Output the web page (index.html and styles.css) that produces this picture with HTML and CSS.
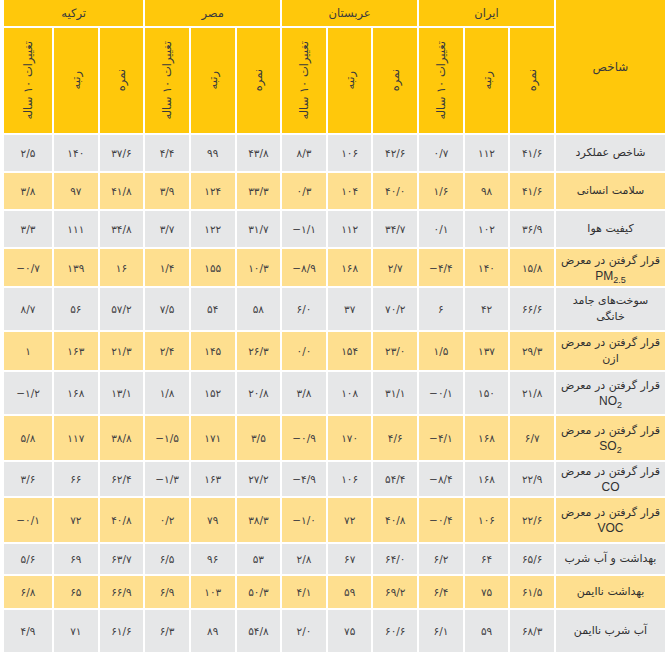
FILE: index.html
```html
<!DOCTYPE html>
<html lang="fa" dir="rtl">
<head>
<meta charset="utf-8">
<title>شاخص عملکرد محیط زیست</title>
<link rel="stylesheet" href="styles.css">
</head>
<body>
<div class="sheet">
  <div class="hd hd-ind">شاخص</div>
  <div class="hd hd-country">ایران</div>
  <div class="hd hd-country">عربستان</div>
  <div class="hd hd-country">مصر</div>
  <div class="hd hd-country">ترکیه</div>

  <div class="hd hd-sub"><span class="vt">نمره</span></div>
  <div class="hd hd-sub"><span class="vt">رتبه</span></div>
  <div class="hd hd-sub"><span class="vt">تغییرات ۱۰ ساله</span></div>
  <div class="hd hd-sub"><span class="vt">نمره</span></div>
  <div class="hd hd-sub"><span class="vt">رتبه</span></div>
  <div class="hd hd-sub"><span class="vt">تغییرات ۱۰ ساله</span></div>
  <div class="hd hd-sub"><span class="vt">نمره</span></div>
  <div class="hd hd-sub"><span class="vt">رتبه</span></div>
  <div class="hd hd-sub"><span class="vt">تغییرات ۱۰ ساله</span></div>
  <div class="hd hd-sub"><span class="vt">نمره</span></div>
  <div class="hd hd-sub"><span class="vt">رتبه</span></div>
  <div class="hd hd-sub"><span class="vt">تغییرات ۱۰ ساله</span></div>

  <div class="row gray">
    <div class="lab">شاخص عملکرد</div>
    <div class="n">۴۱/۶</div><div class="n">۱۱۲</div><div class="n">۰/۷</div>
    <div class="n">۴۲/۶</div><div class="n">۱۰۶</div><div class="n">۸/۳</div>
    <div class="n">۴۳/۸</div><div class="n">۹۹</div><div class="n">۴/۴</div>
    <div class="n">۳۷/۶</div><div class="n">۱۴۰</div><div class="n">۲/۵</div>
  </div>
  <div class="row yel">
    <div class="lab">سلامت انسانی</div>
    <div class="n">۴۱/۶</div><div class="n">۹۸</div><div class="n">۱/۶</div>
    <div class="n">۴۰/۰</div><div class="n">۱۰۴</div><div class="n">۰/۳</div>
    <div class="n">۳۳/۳</div><div class="n">۱۲۴</div><div class="n">۳/۹</div>
    <div class="n">۴۱/۸</div><div class="n">۹۷</div><div class="n">۳/۸</div>
  </div>
  <div class="row gray">
    <div class="lab">کیفیت هوا</div>
    <div class="n">۳۶/۹</div><div class="n">۱۰۲</div><div class="n">۰/۱</div>
    <div class="n">۳۴/۷</div><div class="n">۱۱۲</div><div class="n">−۱/۱</div>
    <div class="n">۳۱/۷</div><div class="n">۱۲۲</div><div class="n">۳/۷</div>
    <div class="n">۳۴/۸</div><div class="n">۱۱۱</div><div class="n">۳/۳</div>
  </div>
  <div class="row yel">
    <div class="lab">قرار گرفتن در معرض<span class="lat">PM<sub>2.5</sub></span></div>
    <div class="n">۱۵/۸</div><div class="n">۱۴۰</div><div class="n">−۴/۴</div>
    <div class="n">۲/۷</div><div class="n">۱۶۸</div><div class="n">−۸/۹</div>
    <div class="n">۱۰/۳</div><div class="n">۱۵۵</div><div class="n">۱/۴</div>
    <div class="n">۱۶</div><div class="n">۱۳۹</div><div class="n">−۰/۷</div>
  </div>
  <div class="row gray">
    <div class="lab">سوخت‌های جامد<br>خانگی</div>
    <div class="n">۶۶/۶</div><div class="n">۴۲</div><div class="n">۶</div>
    <div class="n">۷۰/۲</div><div class="n">۳۷</div><div class="n">۶/۰</div>
    <div class="n">۵۸</div><div class="n">۵۴</div><div class="n">۷/۵</div>
    <div class="n">۵۷/۲</div><div class="n">۵۶</div><div class="n">۸/۷</div>
  </div>
  <div class="row yel">
    <div class="lab">قرار گرفتن در معرض<br>ازن</div>
    <div class="n">۲۹/۳</div><div class="n">۱۳۷</div><div class="n">۱/۵</div>
    <div class="n">۲۳/۰</div><div class="n">۱۵۴</div><div class="n">۰/۰</div>
    <div class="n">۲۶/۳</div><div class="n">۱۴۵</div><div class="n">۲/۴</div>
    <div class="n">۲۱/۳</div><div class="n">۱۶۳</div><div class="n">۱</div>
  </div>
  <div class="row gray">
    <div class="lab">قرار گرفتن در معرض<span class="lat">NO<sub>2</sub></span></div>
    <div class="n">۲۱/۸</div><div class="n">۱۵۰</div><div class="n">−۰/۱</div>
    <div class="n">۳۱/۱</div><div class="n">۱۰۸</div><div class="n">۳/۸</div>
    <div class="n">۲۰/۸</div><div class="n">۱۵۲</div><div class="n">۱/۸</div>
    <div class="n">۱۳/۱</div><div class="n">۱۶۸</div><div class="n">−۱/۲</div>
  </div>
  <div class="row yel">
    <div class="lab">قرار گرفتن در معرض<span class="lat">SO<sub>2</sub></span></div>
    <div class="n">۶/۷</div><div class="n">۱۶۸</div><div class="n">−۴/۱</div>
    <div class="n">۴/۶</div><div class="n">۱۷۰</div><div class="n">−۰/۹</div>
    <div class="n">۳/۵</div><div class="n">۱۷۱</div><div class="n">−۱/۵</div>
    <div class="n">۳۸/۸</div><div class="n">۱۱۷</div><div class="n">۵/۸</div>
  </div>
  <div class="row gray">
    <div class="lab">قرار گرفتن در معرض<span class="lat">CO</span></div>
    <div class="n">۲۲/۹</div><div class="n">۱۶۸</div><div class="n">−۸/۴</div>
    <div class="n">۵۴/۴</div><div class="n">۱۰۶</div><div class="n">−۴/۹</div>
    <div class="n">۲۷/۲</div><div class="n">۱۶۳</div><div class="n">−۱/۳</div>
    <div class="n">۶۲/۴</div><div class="n">۶۶</div><div class="n">۳/۶</div>
  </div>
  <div class="row yel">
    <div class="lab">قرار گرفتن در معرض<span class="lat">VOC</span></div>
    <div class="n">۲۲/۶</div><div class="n">۱۰۶</div><div class="n">−۰/۴</div>
    <div class="n">۴۰/۸</div><div class="n">۷۲</div><div class="n">−۱/۰</div>
    <div class="n">۳۸/۳</div><div class="n">۷۹</div><div class="n">۰/۲</div>
    <div class="n">۴۰/۸</div><div class="n">۷۲</div><div class="n">−۰/۱</div>
  </div>
  <div class="row gray">
    <div class="lab">بهداشت و آب شرب</div>
    <div class="n">۶۵/۶</div><div class="n">۶۴</div><div class="n">۶/۲</div>
    <div class="n">۶۴/۰</div><div class="n">۶۷</div><div class="n">۲/۸</div>
    <div class="n">۵۳</div><div class="n">۹۶</div><div class="n">۶/۵</div>
    <div class="n">۶۳/۷</div><div class="n">۶۹</div><div class="n">۵/۶</div>
  </div>
  <div class="row yel">
    <div class="lab">بهداشت ناایمن</div>
    <div class="n">۶۱/۵</div><div class="n">۷۵</div><div class="n">۶/۴</div>
    <div class="n">۶۹/۲</div><div class="n">۵۹</div><div class="n">۴/۱</div>
    <div class="n">۵۰/۳</div><div class="n">۱۰۳</div><div class="n">۶/۹</div>
    <div class="n">۶۶/۹</div><div class="n">۶۵</div><div class="n">۶/۸</div>
  </div>
  <div class="row gray">
    <div class="lab">آب شرب ناایمن</div>
    <div class="n">۶۸/۳</div><div class="n">۵۹</div><div class="n">۶/۱</div>
    <div class="n">۶۰/۶</div><div class="n">۷۵</div><div class="n">۲/۰</div>
    <div class="n">۵۴/۸</div><div class="n">۸۹</div><div class="n">۶/۳</div>
    <div class="n">۶۱/۶</div><div class="n">۷۱</div><div class="n">۴/۹</div>
  </div>
</div>
</body>
</html>
```
FILE: styles.css
```css
html, body {
  margin: 0;
  padding: 0;
  background: #ffffff;
}
body {
  width: 665px;
  height: 652px;
  overflow: hidden;
  font-family: "DejaVu Sans", "Liberation Sans", sans-serif;
  color: #3a3a3c;
}
.sheet {
  direction: rtl;
  display: grid;
  grid-template-columns: 109px repeat(11, 1fr) 48px;
  grid-template-rows: 26px 105px 36px 36px 36px 37px 42px 38px 42px 44px 34px 44px 30px 32px 42px;
  gap: 2px;
  padding-left: 4px;
  width: 661px;
}
.row {
  display: contents;
}
.hd {
  background: #ffc80b;
  display: flex;
  align-items: center;
  justify-content: center;
  font-size: 11.5px;
  color: #3a3a3c;
}
.hd-ind {
  grid-row: span 2;
  font-size: 12px;
}
.hd-country {
  grid-column: span 3;
}
.vt {
  writing-mode: vertical-rl;
  transform: rotate(180deg);
  white-space: nowrap;
  font-size: 11.5px;
}
.row > div {
  display: flex;
  align-items: center;
  justify-content: center;
}
.row.gray > div {
  background: #e6e7e8;
}
.row.yel > div {
  background: #fedf8f;
}
.lab {
  flex-direction: column;
  text-align: center;
  font-size: 11px;
  line-height: 16px;
  color: #2f2f31;
}
.lat {
  font-family: "Liberation Sans", Arial, sans-serif;
  font-size: 12px;
  line-height: 14px;
  display: block;
}
.lat sub {
  font-size: 9px;
  line-height: 0;
}
.n {
  direction: ltr;
  font-size: 10.5px;
  color: #414043;
}
```
